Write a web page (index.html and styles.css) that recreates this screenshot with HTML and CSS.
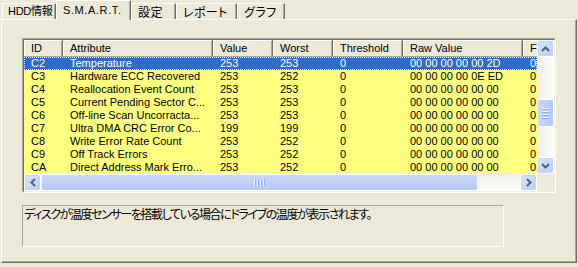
FILE: index.html
```html
<!DOCTYPE html>
<html lang="ja">
<head>
    <meta charset="UTF-8">
    <title>S.M.A.R.T.</title>
    <link rel="stylesheet" href="styles.css">
</head>
<body>
    <div class="tabs">
        <div class="tab tab-hdd">HDD情報</div>
        <div class="tab active tab-smart">S.M.A.R.T.</div>
        <div class="tab tab-jp tab-conf">設定</div>
        <div class="tab tab-jp tab-report">レポート</div>
        <div class="tab tab-jp tab-graph">グラフ</div>
    </div>

    <div class="panel">
        <div class="listview">
            <div class="list-body">
                <div class="row head">
                    <span>ID</span><span>Attribute</span><span>Value</span><span>Worst</span><span>Threshold</span><span>Raw Value</span><span>F</span>
                </div>
                <div class="row selected">
                    <span>C2</span><span>Temperature</span><span>253</span><span>253</span><span>0</span><span>00 00 00 00 00 2D</span><span>0:</span>
                </div>
                <div class="row">
                    <span>C3</span><span>Hardware ECC Recovered</span><span>253</span><span>252</span><span>0</span><span>00 00 00 00 0E ED</span><span>0:</span>
                </div>
                <div class="row">
                    <span>C4</span><span>Reallocation Event Count</span><span>253</span><span>253</span><span>0</span><span>00 00 00 00 00 00</span><span>0:</span>
                </div>
                <div class="row">
                    <span>C5</span><span>Current Pending Sector C...</span><span>253</span><span>253</span><span>0</span><span>00 00 00 00 00 00</span><span>0:</span>
                </div>
                <div class="row">
                    <span>C6</span><span>Off-line Scan Uncorracta...</span><span>253</span><span>253</span><span>0</span><span>00 00 00 00 00 00</span><span>0:</span>
                </div>
                <div class="row">
                    <span>C7</span><span>Ultra DMA CRC Error Co...</span><span>199</span><span>199</span><span>0</span><span>00 00 00 00 00 00</span><span>0:</span>
                </div>
                <div class="row">
                    <span>C8</span><span>Write Error Rate Count</span><span>253</span><span>252</span><span>0</span><span>00 00 00 00 00 00</span><span>0:</span>
                </div>
                <div class="row">
                    <span>C9</span><span>Off Track Errors</span><span>253</span><span>252</span><span>0</span><span>00 00 00 00 00 00</span><span>0:</span>
                </div>
                <div class="row">
                    <span>CA</span><span>Direct Address Mark Erro...</span><span>253</span><span>252</span><span>0</span><span>00 00 00 00 00 00</span><span>0:</span>
                </div>
            </div>

            <!-- スクロールバー (縦) -->
            <div class="vscroll">
                <div class="sbtn">
                    <svg width="9" height="6" viewBox="0 0 9 6"><path d="M1 5 L4.5 1.5 L8 5" fill="none" stroke="#4D6185" stroke-width="2"/></svg>
                </div>
                <div class="vtrack">
                    <div class="vthumb"><i></i><i></i><i></i><i></i></div>
                </div>
                <div class="sbtn">
                    <svg width="9" height="6" viewBox="0 0 9 6"><path d="M1 1 L4.5 4.5 L8 1" fill="none" stroke="#4D6185" stroke-width="2"/></svg>
                </div>
            </div>

            <!-- スクロールバー (横) -->
            <div class="hscroll">
                <div class="sbtn">
                    <svg width="6" height="9" viewBox="0 0 6 9"><path d="M5 1 L1.5 4.5 L5 8" fill="none" stroke="#4D6185" stroke-width="2"/></svg>
                </div>
                <div class="htrack">
                    <div class="hthumb"><i></i><i></i><i></i><i></i></div>
                </div>
                <div class="sbtn">
                    <svg width="6" height="9" viewBox="0 0 6 9"><path d="M1 1 L4.5 4.5 L1 8" fill="none" stroke="#4D6185" stroke-width="2"/></svg>
                </div>
            </div>
            <div class="corner"></div>
        </div>

        <div class="desc">ディスクが温度センサーを搭載している場合にドライブの温度が表示されます。</div>
    </div>
</body>
</html>
```

FILE: styles.css
```css
/* ベース */
body {
    margin: 0;
    width: 578px;
    height: 267px;
    overflow: hidden;
    background-color: #ECE9D8;
    font-family: "Liberation Sans", "Noto Sans CJK JP", sans-serif;
    font-size: 11px;
    color: #000;
}

/* タブ */
.tabs {
    display: flex;
    align-items: flex-end;
    height: 19px;
    padding-left: 2px;
    position: relative;
    z-index: 2;
}

.tab {
    box-sizing: border-box;
    height: 16px;
    line-height: 15px;
    padding-left: 5px;
    border-top: 1px solid #fff;
    border-left: 1px solid #fff;
    border-right: 1px solid #716F64;
    box-shadow: inset -1px 0 #ACA899;
    font-size: 11px;
    font-feature-settings: "palt";
    letter-spacing: -0.3px;
    white-space: nowrap;
    overflow: hidden;
}

.tab-jp {
    font-family: "Noto Sans CJK JP", sans-serif;
    font-size: 12px;
    letter-spacing: 0.4px;
    padding-left: 6px;
}

.tab.active {
    height: 20px;
    margin-bottom: -1px;
    line-height: 18px;
    background-color: #ECE9D8;
    padding-left: 6px;
    letter-spacing: 0.6px;
}

.tab-hdd { width: 54px; }
.tab-smart { width: 75px; }
.tab-conf { width: 45px; }
.tab-report { width: 61px; }
.tab-graph { width: 48px; }

/* タブの中身 */
.panel {
    box-sizing: border-box;
    width: 576px;
    height: 244px;
    margin-left: 1px;
    padding: 18px 0 0 20px;
    border-top: 1px solid #fff;
    border-left: 1px solid #fff;
    border-right: 1px solid #716F64;
    border-bottom: 1px solid #716F64;
    box-shadow: inset -1px -1px #ACA899;
    position: relative;
    z-index: 1;
}

/* リストビュー */
.listview {
    box-sizing: border-box;
    width: 534px;
    height: 155px;
    border: 1px solid;
    border-color: #ACA899 #fff #fff #ACA899;
    padding: 1px;
    background-color: #fff;
    display: grid;
    grid-template-columns: 513px 17px;
    grid-template-rows: 134px 17px;
    position: relative;
}

.listview::before {
    content: "";
    position: absolute;
    inset: 0;
    border: 1px solid;
    border-color: #716F64 #F1EFE2 #F1EFE2 #716F64;
    pointer-events: none;
}

.list-body {
    overflow: hidden;
    background-color: #FFFF80;
}

.row {
    display: grid;
    grid-template-columns: 39px 150px 60px 60px 70px 120px 60px;
    height: 13px;
    line-height: 13px;
    white-space: nowrap;
}

.row span {
    padding-left: 7px;
    overflow: hidden;
}

.row.head {
    height: 17px;
    line-height: 16px;
    background-color: #ECE9D8;
}

.row.head span {
    box-sizing: border-box;
    border-right: 1px solid #716F64;
    border-bottom: 1px solid #ACA899;
    box-shadow: inset 1px 1px #fff, inset -1px 0 #ACA899;
}

.row.selected {
    background-color: #316AC5;
    color: #fff;
    outline: 1px dotted #FFFF80;
    outline-offset: -1px;
}

/* スクロールバー */
.sbtn {
    box-sizing: border-box;
    width: 17px;
    height: 17px;
    flex: none;
    display: flex;
    align-items: center;
    justify-content: center;
    border: 1px solid #fff;
    border-radius: 2px;
    background: linear-gradient(135deg, #DCE6FD, #B8CDFA);
    box-shadow: inset 0 0 0 1px #C3D3FD;
}

.vscroll {
    display: flex;
    flex-direction: column;
    background: linear-gradient(to right, #EEEDE5, #FDFDFB);
}

.vtrack {
    flex: 1;
    padding-top: 42px;
}

.vthumb {
    box-sizing: border-box;
    height: 28px;
    border: 1px solid #fff;
    border-radius: 2px;
    background: linear-gradient(to right, #C9D8FC, #B4C8F6);
    display: flex;
    flex-direction: column;
    align-items: center;
    justify-content: center;
    gap: 1px;
}

.vthumb i {
    width: 7px;
    height: 1px;
    background-color: #EEF4FE;
    border-bottom: 1px solid #8CB0F8;
}

.hscroll {
    display: flex;
    background: linear-gradient(#EEEDE5, #FDFDFB);
}

.htrack {
    flex: 1;
}

.hthumb {
    box-sizing: border-box;
    width: 437px;
    height: 17px;
    border: 1px solid #fff;
    border-radius: 2px;
    background: linear-gradient(#C9D8FC, #B4C8F6);
    display: flex;
    align-items: center;
    justify-content: center;
    gap: 1px;
}

.hthumb i {
    width: 1px;
    height: 7px;
    background-color: #EEF4FE;
    border-right: 1px solid #8CB0F8;
}

.corner {
    background-color: #ECE9D8;
}

/* 説明 */
.desc {
    box-sizing: border-box;
    width: 482px;
    height: 42px;
    margin-top: 12px;
    padding: 1px 0 0 1px;
    border: 1px solid;
    border-color: #ACA899 #fff #fff #ACA899;
    font-family: "Noto Sans CJK JP", sans-serif;
    font-size: 12px;
    line-height: 14px;
    font-feature-settings: "palt";
    letter-spacing: -1.4px;
    white-space: nowrap;
}
```
